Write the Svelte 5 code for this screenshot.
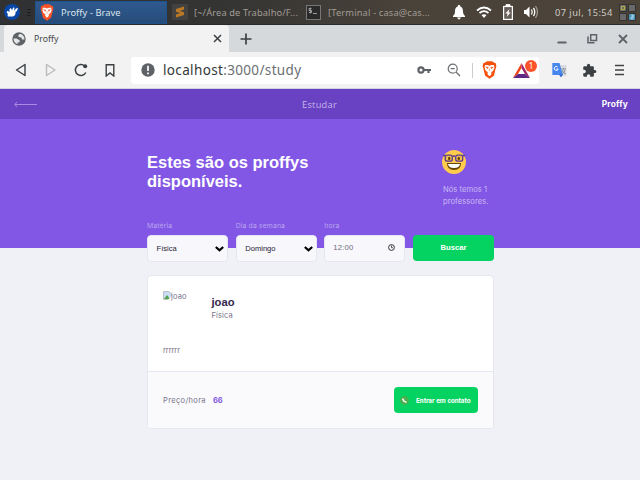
<script>
  const fields = [
    { label: 'Matéria', value: 'Física' },
    { label: 'Dia da semana', value: 'Domingo' }
  ];
</script>

<div class="screen">
  <div class="taskbar">
    <svg class="menu" width="18" height="18" viewBox="0 0 18 18"><circle cx="9" cy="9" r="8" fill="#0a47a5" /><path d="M4 8Q5.500 8 6.500 9Q6 6 7.500 5Q9 6 9 8Q9 5.500 11 4Q11.800 6 11 8L13 5.500L15 5Q14.500 8 12.500 9Q13 12 10 13.500H5Q4 12 5 11Q3 10 4 8Z" fill="#fff" /></svg>
    <div class="grip"><i></i><i></i><i></i></div>
    <div class="task active">
      <svg width="14" height="17" viewBox="0 0 24 28"><path d="M5 2L8 0h8l3 2 3 1 1 5-1 3-3 12-7 5-7-5L2 11 1 8l1-5z" fill="#fb542b" /><path d="M5 6l4 0 3 1 3-1 4 0 1 4-2 5-3 2 0 3-3 3-3-3 0-3-3-2-2-5z" fill="#fff" /><path d="M6 9l4 1-1 2zM18 9l-4 1 1 2zM12 12v4" fill="#fb542b" stroke="#fb542b" stroke-width=".8" /></svg>
      <span>Proffy - Brave</span>
    </div>
    <svg class="sublime" width="16" height="16" viewBox="0 0 16 16"><rect width="16" height="16" rx="1" fill="#444241" /><path d="M4 5L12 2.500V5.500L8 7L12 8.300V11L4 13.500V10.500L8 9L4 7.700Z" fill="#b97825" /></svg>
    <span class="t2">[~/Área de Trabalho/F...</span>
    <svg class="term" width="15" height="15" viewBox="0 0 15 15"><rect x=".5" y=".5" width="14" height="14" fill="#292a29" stroke="#777" /><path d="M5.500 3.500H3V5.500H5.500V7.500H3M4.300 2.500V8.500M7 8.500H11" fill="none" stroke="#aaa" stroke-width=".9" /></svg>
    <span class="t3">[Terminal - casa@cas...</span>
    <svg class="bell" width="14" height="16" viewBox="0 0 14 16"><path d="M7 1C8 1 8.300 1.700 8.300 2.500C11 3.500 11 6 11 8Q11 10.500 13 12V13H1V12Q3 10.500 3 8C3 6 3 3.500 5.700 2.500C5.700 1.700 6 1 7 1M5 13.500H9Q8 15.500 7 15.500T5 13.500" fill="#fff" /></svg>
    <svg class="wifi" width="16" height="13" viewBox="0 0 16 13"><path d="M1 4.500Q8-1.500 15 4.500M3.500 7Q8 3.200 12.500 7" fill="none" stroke="#fff" stroke-width="1.8" /><path d="M5.500 9Q8 7.500 10.500 9L8 12Z" fill="#fff" /></svg>
    <svg class="batt" width="10" height="16" viewBox="0 0 10 16"><path d="M3 2V.7H7V2" fill="#fff" stroke="#fff" /><rect x=".6" y="2.500" width="8.800" height="12.900" fill="#665f58" stroke="#fff" stroke-width="1.200" /><path d="M6.500 5L2.300 9.500H4.700L3.700 13L7.700 8.500H5.500Z" fill="#fff" /></svg>
    <svg class="vol" width="16" height="14" viewBox="0 0 16 14"><path d="M1 5H3L6.500 1.500V12.500L3 9H1Z" fill="#fff" /><path d="M8.500 4.500Q10 7 8.500 9.500M10.500 2.800Q13 7 10.500 11.200" fill="none" stroke="#fff" stroke-width="1.300" /><path d="M12.500 1Q16.500 7 12.500 13" fill="none" stroke="#9a958f" stroke-width="1.300" /></svg>
    <span class="clock">07 jul, 15:54</span>
    <svg class="pager" width="17" height="17" viewBox="0 0 17 17"><g fill="#66686a" stroke="#35322f"><rect x=".5" y=".5" width="7" height="7" /><rect x="9.500" y=".5" width="7" height="7" /><rect x=".5" y="9.500" width="7" height="7" /><rect x="9.500" y="9.500" width="7" height="7" fill="#4b91b5" /></g><circle cx="4" cy="4" r="1.800" fill="none" stroke="#b9b541" stroke-width="1.1" /><path d="M12 11H14V13H12V15H14V11" fill="none" stroke="#b1dcf0" stroke-width=".8" /></svg>
  </div>

  <div class="tabs">
    <div class="tab">
      <svg class="globe" width="14" height="14" viewBox="0 0 14 14"><circle cx="7" cy="7" r="6.700" fill="#5f6368" /><path d="M7.500 2L6 4L7.500 5.200L9.500 5.500L10 7.500L12.500 7.500Q12.500 3.500 9 2ZM1.500 6.500H4.500L7 8L8 9L7 10.500L5.500 10.500V12.200Q1.500 10.500 1.500 6.500" fill="#e6e7e8" /></svg>
      <span>Proffy</span>
      <svg class="x" width="9" height="9" viewBox="0 0 9 9"><path d="M1 1L8 8M8 1L1 8" stroke="#3d4043" stroke-width="1.500" /></svg>
    </div>
    <svg class="plus" width="12" height="12" viewBox="0 0 12 12"><path d="M6 .5V11.500M.5 6H11.500" stroke="#3c4043" stroke-width="1.700" /></svg>
    <div class="win">
      <svg width="10" height="10" viewBox="0 0 10 10"><path d="M.5 8.500H9.500" stroke="#5f6368" stroke-width="2" /></svg>
      <svg width="11" height="10" viewBox="0 0 11 10"><path d="M3.700 .7H9.500V6.500H3.700ZM1 2.500V8.700H7.500" fill="none" stroke="#5f6368" stroke-width="1.500" /></svg>
      <svg width="10" height="10" viewBox="0 0 10 10"><path d="M1 1L9 9M9 1L1 9" stroke="#5f6368" stroke-width="1.800" /></svg>
    </div>
  </div>

  <div class="toolbar">
    <svg class="back" width="12" height="14" viewBox="0 0 12 14"><path d="M10 1.500V12.500L1.500 7Z" fill="none" stroke="#3c4043" stroke-width="1.400" stroke-linejoin="round" /></svg>
    <svg class="fwd" width="12" height="14" viewBox="0 0 12 14"><path d="M1.500 1.500V12.500L10 7Z" fill="none" stroke="#bbb" stroke-width="1.400" stroke-linejoin="round" /></svg>
    <svg class="reload" width="14" height="14" viewBox="0 0 14 14"><path d="M11.800 9.500A5.500 5.500 0 1 1 10.500 2.800" fill="none" stroke="#3c4043" stroke-width="1.500" /><circle cx="11.200" cy="3.300" r="2" fill="#3c4043" /></svg>
    <svg class="mark" width="10" height="13" viewBox="0 0 10 13"><path d="M1.200 .8H8.800V12L5 9L1.200 12Z" fill="none" stroke="#3c4043" stroke-width="1.400" /></svg>
    <div class="address">
      <svg class="info" width="14" height="14" viewBox="0 0 14 14"><circle cx="7" cy="7" r="6.700" fill="#5f6368" /><path d="M7 2.800V8M7 9.500V11.200" stroke="#fff" stroke-width="1.700" /></svg>
      <span class="url"><b>localhost</b>:3000/study</span>
      <svg class="key" width="14" height="8" viewBox="0 0 14 8"><circle cx="4" cy="4" r="2.600" fill="none" stroke="#5f6368" stroke-width="2.200" /><path d="M6 4H14M11.500 4V7" stroke="#5f6368" stroke-width="2.200" /></svg>
      <svg class="mag" width="14" height="14" viewBox="0 0 14 14"><circle cx="5.700" cy="5.700" r="4.500" fill="none" stroke="#6b6f73" stroke-width="1.200" /><path d="M3.700 5.700H7.700M9 9L13 13" stroke="#6b6f73" stroke-width="1.300" /></svg>
      <i class="divider"></i>
      <svg class="brave" width="15" height="18" viewBox="0 0 24 28"><path d="M5 2L8 0h8l3 2 3 1 1 5-1 3-3 12-7 5-7-5L2 11 1 8l1-5z" fill="#f5500b" /><path d="M5 6l4 0 3 1 3-1 4 0 1 4-2 5-3 2 0 4-3 3-3-3 0-4-3-2-2-5z" fill="#fff" /><path d="M6 9l4 1-1 2zM18 9l-4 1 1 2zM12 12v4" fill="#f5500b" stroke="#f5500b" stroke-width=".8" /></svg>
      <div class="bat">
        <svg width="17" height="15" viewBox="0 0 17 15"><path d="M8.500 0L0 15L5 11L8.500 5Z" fill="#f04418" /><path d="M8.500 0L17 15L12 11L8.500 5Z" fill="#9e2265" /><path d="M0 15H17L12 11H5Z" fill="#5c2785" /></svg>
        <span>1</span>
      </div>
    </div>
    <svg class="translate" width="15" height="16" viewBox="0 0 15 16"><path d="M7 3H14.500V14H10Z" fill="#d8dce0" /><path d="M.3 1H7.500L11 13H.3Z" fill="#4686ef" /><path d="M7 12.500H11L9 15.500Z" fill="#3564cf" /><path d="M5.700 5A2 2 0 1 0 6.200 7H4.500" fill="none" stroke="#fff" stroke-width="1" /><path d="M9.500 7H14M11.500 6V7M10 8Q11 11 14 12M13 8Q12 11 10 12" stroke="#757b83" fill="none" stroke-width=".8" /></svg>
    <svg class="puzzle" width="15" height="15" viewBox="0 0 24 24"><path d="M20.500 11H19V7a2 2 0 0 0-2-2h-4V3.500a2.500 2.500 0 0 0-5 0V5H4a2 2 0 0 0-2 2v3.800h1.500a2.700 2.700 0 0 1 0 5.400H2V20a2 2 0 0 0 2 2h3.800v-1.500a2.700 2.700 0 0 1 5.400 0V22H17a2 2 0 0 0 2-2v-4h1.500a2.500 2.500 0 0 0 0-5z" fill="#3c4043" /></svg>
    <svg class="burger" width="9" height="12" viewBox="0 0 9 12"><path d="M0 1.500H9M0 6H9M0 10.500H9" stroke="#444" stroke-width="1.400" /></svg>
  </div>

  <header>
    <svg class="arrow" width="24" height="7" viewBox="0 0 24 7"><path d="M1 3.500H23M3 1L.8 3.500L3 6" fill="none" stroke="#a98ae0" stroke-width="1" /></svg>
    <span class="title">Estudar</span>
    <strong>Proffy</strong>
  </header>

  <main>
    <section class="hero">
      <div class="intro">
        <h1>Estes são os proffys<br />disponíveis.</h1>
        <div class="count">
          <svg width="24" height="24" viewBox="0 0 24 24"><circle cx="12" cy="12" r="12" fill="#ffcc4d" /><g fill="#f3bd55" stroke="#5b3b91" stroke-width="1.300"><rect x="3.300" y="5.200" width="7" height="6" rx="2" /><rect x="13.700" y="5.200" width="7" height="6" rx="2" /><path d="M1 5.500H3.500M20.500 5.500H23M10.500 6.500Q12 5.500 13.500 6.500" /></g><ellipse cx="7.200" cy="8.500" rx="1.200" ry="1.800" fill="#664500" /><ellipse cx="16.800" cy="8.500" rx="1.200" ry="1.800" fill="#664500" /><path d="M5 13H19Q19 20 12 20T5 13" fill="#664500" /><path d="M6 14H18Q17.500 18 12 18T6 14" fill="#fff" /></svg>
          <p>Nós temos 1<br />professores.</p>
        </div>
      </div>
      <form>
        {#each fields as f}
          <div class="field">
            <span class="label">{f.label}</span>
            <div class="box select"><span>{f.value}</span><svg width="9" height="6" viewBox="0 0 9 6"><path d="M.8 1L4.500 4.300L8.200 1" fill="none" stroke="#000" stroke-width="2.200" /></svg></div>
          </div>
        {/each}
        <div class="field">
          <span class="label">hora</span>
          <div class="box time"><span>12:00</span><svg width="7" height="7" viewBox="0 0 7 7"><circle cx="3.500" cy="3.500" r="2.900" fill="none" stroke="#333" stroke-width="1" /><path d="M3.500 1.500V3.700H5" fill="none" stroke="#333" stroke-width=".8" /></svg></div>
        </div>
        <button class="search" type="button">Buscar</button>
      </form>
    </section>

    <article>
      <div class="profile">
        <div class="avatar"><svg width="9" height="9" viewBox="0 0 9 9"><path d="M.5 .5H6L8.500 3V8.500H.5Z" fill="#cbdcf5" stroke="#aaa" stroke-width=".7" /><path d="M1 8L4 4L7 8Z" fill="#50a548" /><path d="M5 9L9 4.500V9Z" fill="#fff" /></svg><span>joao</span></div>
        <div><h2>joao</h2><p>Física</p></div>
      </div>
      <p class="bio">rrrrrr</p>
      <footer>
        <span class="price">Preço/hora</span><b class="value">66</b>
        <button class="contact" type="button"><svg width="9" height="9" viewBox="0 0 9 9"><circle cx="4.500" cy="4.500" r="4.400" fill="#4caf50" /><path d="M2.800 2.500Q3 5.500 6.500 6.300" fill="none" stroke="#fff" stroke-width="1.500" /></svg><span>Entrar em contato</span></button>
      </footer>
    </article>
  </main>
</div>

<style>
  :global(body) { margin: 0; }
  * { box-sizing: border-box; }
  .screen { width: 640px; height: 480px; overflow: hidden; background: #f0f0f7; font-family: "Noto Sans", sans-serif; white-space: nowrap; }
  svg { display: block; flex: none; }
  span { flex: none; }
  p, h1, h2 { margin: 0; font-weight: 400; }
  button { border: 0; padding: 0; color: #fff; background: #04d361; }

  .taskbar { height: 25px; display: flex; align-items: center; background: linear-gradient(90deg, #303133, #343433 35%, #4a433a 65%, #4c4339); border-bottom: 1px solid #27292b; color: #a19c95; font: 9.3px "Noto Sans", sans-serif; }
  .menu { margin-left: 3px; }
  .grip { width: 4px; margin: 0 4px 0 6px; display: grid; gap: 2px; }
  .grip i { height: 1px; background: #1c1d1e; }
  .task { width: 132px; height: 23px; margin-right: 5px; display: flex; align-items: center; padding-left: 4px; background: linear-gradient(#2f5a8f, #264b79); border: 1px solid #1e5189; color: #dce3ec; }
  .task svg { margin-right: 7px; }
  .task span { letter-spacing: .06px; }
  .t2 { width: 106px; margin-left: 6px; letter-spacing: .12px; }
  .term { margin-left: 6px; }
  .t3 { width: 124px; margin-left: 7px; letter-spacing: .16px; }
  .wifi { margin-left: 10px; }
  .batt { margin-left: 11px; }
  .vol { margin-left: 10px; }
  .clock { width: 61px; margin-left: 16px; color: #d0ccc7; letter-spacing: .43px; }
  .pager { margin-left: 3px; }

  .tabs { height: 27px; background: #d5d9dc; display: flex; align-items: center; }
  .tab { width: 225px; height: 27px; margin-left: 4px; padding: 0 7px 0 8px; background: #f2f2f2; border-radius: 4px 4px 0 0; display: flex; align-items: center; font-size: 8.7px; color: #45484b; }
  .tab span { margin-left: 8px; }
  .tab .x { margin-left: auto; }
  .plus { margin-left: 11px; }
  .win { margin: 0 12px 0 auto; display: flex; gap: 20px; }

  .toolbar { height: 37px; display: flex; align-items: center; background: #f2f2f2; border-bottom: 1px solid #d1d4dc; }
  .back { margin-left: 15px; }
  .fwd { margin-left: 18px; }
  .reload { margin-left: 17px; }
  .mark { margin-left: 17px; }
  .address { width: 408px; height: 27px; margin-left: 16px; display: flex; align-items: center; background: #fff; border-radius: 3px; }
  .info { margin-left: 10px; }
  .url { width: 254px; margin-left: 8px; font-size: 13.5px; letter-spacing: .35px; color: #6b6e72; }
  .url b { font-weight: 400; color: #34373a; }
  .mag { margin-left: 16px; }
  .divider { width: 1px; height: 15px; background: #ccc; margin-left: 11px; }
  .brave { margin-left: 9px; }
  .bat { position: relative; margin: 1px 0 0 16px; }
  .bat span { position: absolute; left: 12px; top: -3px; width: 12px; height: 12px; line-height: 12px; border-radius: 6px; background: #fb542b; color: #fff; font-size: 8px; text-align: center; }
  .translate { margin-left: 13px; }
  .puzzle { margin-left: 15px; }
  .burger { margin-left: 18px; }

  header { height: 30px; background: #6842c2; display: flex; align-items: center; color: #c7b5ec; font: 9.3px "Open Sans", sans-serif; }
  .arrow { margin-left: 14px; }
  .title { margin-left: 264px; letter-spacing: .25px; }
  header strong { margin: 0 12px 0 auto; color: #fff; font: 700 8.4px "Inter", sans-serif; letter-spacing: .2px; }

  .hero { height: 129px; background: #8257e5; padding: 31px 146px 0 147px; }
  .intro { height: 72px; display: flex; justify-content: space-between; }
  h1 { margin-top: 3px; color: #fff; font: 700 16.5px/19px "Liberation Sans", sans-serif; }
  .count { width: 52px; }
  .count p { margin-top: 10px; padding-left: 1px; color: #cbb9f3; font: 7.6px/12px "Inter", sans-serif; letter-spacing: .05px; }
  form { display: flex; }
  .field { width: 81px; margin-right: 7.700px; }
  .label { display: block; height: 13px; color: #bba5ef; font: 6.8px/8px "Inter", sans-serif; letter-spacing: .16px; }
  .box { height: 27px; padding: 0 3px 0 8.500px; display: flex; align-items: center; justify-content: space-between; background: #f8f8fc; border: 1px solid #e6e6f0; border-radius: 4px; color: #252236; font: 7.6px "Liberation Sans", sans-serif; }
  .time { padding-left: 8px; padding-right: 9px; padding-bottom: 2px; color: #6f6a78; font-size: 7.700px; letter-spacing: .15px; }
  .search { width: 81px; height: 26px; margin-top: 13px; padding-bottom: 2px; border-radius: 4px; font: 700 7.700px "Liberation Sans", sans-serif; }

  article { width: 347px; height: 154px; margin: 27px 0 0 147px; background: #fff; border: 1px solid #e6e6f0; border-radius: 4px; overflow: hidden; color: #77718a; font: 7.5px "Inter", sans-serif; }
  .profile { height: 66px; padding: 15px; display: flex; }
  .avatar { width: 48.500px; display: flex; }
  .avatar span { margin: 1px 0 0 -1px; letter-spacing: .15px; }
  h2 { margin-top: 4px; color: #32264d; font: 700 11.2px/14px "Liberation Sans", sans-serif; }
  .profile p { margin-top: 2px; line-height: 9px; letter-spacing: .1px; }
  .bio { height: 29px; padding: 4px 15px 0; line-height: 9px; letter-spacing: -.1px; }
  footer { height: 57px; padding: 0 15px; display: flex; align-items: center; background: #fafafc; border-top: 1px solid #e6e6f0; }
  .price { letter-spacing: .36px; }
  .value { margin-left: 7px; color: #8257e5; }
  .contact { width: 84px; height: 26px; margin-left: auto; padding-left: 6px; border-radius: 4px; display: flex; align-items: center; font: 700 6.8px Roboto, sans-serif; }
  .contact span { margin: 1px 0 0 7px; }
</style>
